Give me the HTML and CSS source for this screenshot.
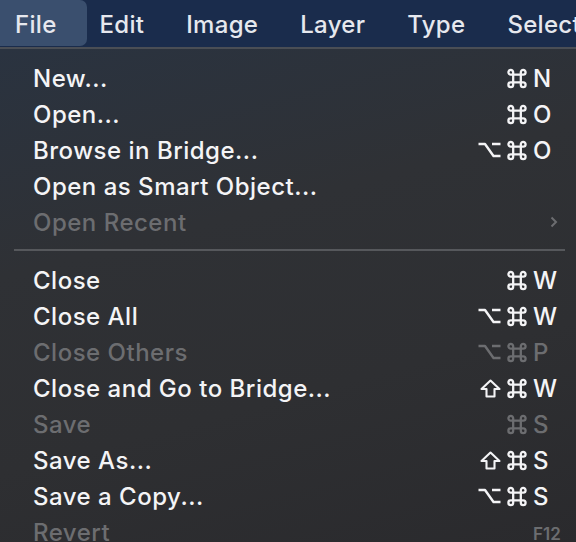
FILE: index.html
```html
<!DOCTYPE html>
<html>
<head>
<meta charset="utf-8">
<link rel="stylesheet" href="styles.css">
</head>
<body>
<div class="screen">
  <nav class="menubar">
    <span class="mb-item active">File</span>
    <span class="mb-item">Edit</span>
    <span class="mb-item">Image</span>
    <span class="mb-item">Layer</span>
    <span class="mb-item">Type</span>
    <span class="mb-item">Select</span>
  </nav>
  <div class="menu">
    <div class="row"><span class="label">New...</span><span class="sc"><span class="mods"><svg class="ic cmd" viewBox="0 0 22 22"><path d="M7 4.5 V17.5 A2.5 2.5 0 1 1 4.5 15 H17.5 A2.5 2.5 0 1 1 15 17.5 V4.5 A2.5 2.5 0 1 1 17.5 7 H4.5 A2.5 2.5 0 1 1 7 4.5 Z"/></svg></span><span class="key">N</span></span></div>
    <div class="row"><span class="label">Open...</span><span class="sc"><span class="mods"><svg class="ic cmd" viewBox="0 0 22 22"><path d="M7 4.5 V17.5 A2.5 2.5 0 1 1 4.5 15 H17.5 A2.5 2.5 0 1 1 15 17.5 V4.5 A2.5 2.5 0 1 1 17.5 7 H4.5 A2.5 2.5 0 1 1 7 4.5 Z"/></svg></span><span class="key">O</span></span></div>
    <div class="row"><span class="label">Browse in Bridge...</span><span class="sc"><span class="mods"><svg class="ic opt" viewBox="0 0 23 16"><path d="M0.5 2 H7 L15.5 14 H22.5 M14 2 H22.5"/></svg><svg class="ic cmd" viewBox="0 0 22 22"><path d="M7 4.5 V17.5 A2.5 2.5 0 1 1 4.5 15 H17.5 A2.5 2.5 0 1 1 15 17.5 V4.5 A2.5 2.5 0 1 1 17.5 7 H4.5 A2.5 2.5 0 1 1 7 4.5 Z"/></svg></span><span class="key">O</span></span></div>
    <div class="row"><span class="label">Open as Smart Object...</span></div>
    <div class="row disabled"><span class="label">Open Recent</span><span class="arrow"><svg width="8" height="12" viewBox="0 0 8 12"><path d="M1.5 1.5 L6 6 L1.5 10.5" fill="none" stroke="currentColor" stroke-width="2"/></svg></span></div>
    <div class="sep"></div>
    <div class="row"><span class="label">Close</span><span class="sc"><span class="mods"><svg class="ic cmd" viewBox="0 0 22 22"><path d="M7 4.5 V17.5 A2.5 2.5 0 1 1 4.5 15 H17.5 A2.5 2.5 0 1 1 15 17.5 V4.5 A2.5 2.5 0 1 1 17.5 7 H4.5 A2.5 2.5 0 1 1 7 4.5 Z"/></svg></span><span class="key">W</span></span></div>
    <div class="row"><span class="label">Close All</span><span class="sc"><span class="mods"><svg class="ic opt" viewBox="0 0 23 16"><path d="M0.5 2 H7 L15.5 14 H22.5 M14 2 H22.5"/></svg><svg class="ic cmd" viewBox="0 0 22 22"><path d="M7 4.5 V17.5 A2.5 2.5 0 1 1 4.5 15 H17.5 A2.5 2.5 0 1 1 15 17.5 V4.5 A2.5 2.5 0 1 1 17.5 7 H4.5 A2.5 2.5 0 1 1 7 4.5 Z"/></svg></span><span class="key">W</span></span></div>
    <div class="row disabled"><span class="label">Close Others</span><span class="sc"><span class="mods"><svg class="ic opt" viewBox="0 0 23 16"><path d="M0.5 2 H7 L15.5 14 H22.5 M14 2 H22.5"/></svg><svg class="ic cmd" viewBox="0 0 22 22"><path d="M7 4.5 V17.5 A2.5 2.5 0 1 1 4.5 15 H17.5 A2.5 2.5 0 1 1 15 17.5 V4.5 A2.5 2.5 0 1 1 17.5 7 H4.5 A2.5 2.5 0 1 1 7 4.5 Z"/></svg></span><span class="key">P</span></span></div>
    <div class="row"><span class="label">Close and Go to Bridge...</span><span class="sc"><span class="mods"><svg class="ic shift" viewBox="0 0 21 19"><path d="M10.5 1.5 L19.5 10 H14.5 V17.5 H6.5 V10 H1.5 Z"/></svg><svg class="ic cmd" viewBox="0 0 22 22"><path d="M7 4.5 V17.5 A2.5 2.5 0 1 1 4.5 15 H17.5 A2.5 2.5 0 1 1 15 17.5 V4.5 A2.5 2.5 0 1 1 17.5 7 H4.5 A2.5 2.5 0 1 1 7 4.5 Z"/></svg></span><span class="key">W</span></span></div>
    <div class="row disabled"><span class="label">Save</span><span class="sc"><span class="mods"><svg class="ic cmd" viewBox="0 0 22 22"><path d="M7 4.5 V17.5 A2.5 2.5 0 1 1 4.5 15 H17.5 A2.5 2.5 0 1 1 15 17.5 V4.5 A2.5 2.5 0 1 1 17.5 7 H4.5 A2.5 2.5 0 1 1 7 4.5 Z"/></svg></span><span class="key">S</span></span></div>
    <div class="row"><span class="label">Save As...</span><span class="sc"><span class="mods"><svg class="ic shift" viewBox="0 0 21 19"><path d="M10.5 1.5 L19.5 10 H14.5 V17.5 H6.5 V10 H1.5 Z"/></svg><svg class="ic cmd" viewBox="0 0 22 22"><path d="M7 4.5 V17.5 A2.5 2.5 0 1 1 4.5 15 H17.5 A2.5 2.5 0 1 1 15 17.5 V4.5 A2.5 2.5 0 1 1 17.5 7 H4.5 A2.5 2.5 0 1 1 7 4.5 Z"/></svg></span><span class="key">S</span></span></div>
    <div class="row"><span class="label">Save a Copy...</span><span class="sc"><span class="mods"><svg class="ic opt" viewBox="0 0 23 16"><path d="M0.5 2 H7 L15.5 14 H22.5 M14 2 H22.5"/></svg><svg class="ic cmd" viewBox="0 0 22 22"><path d="M7 4.5 V17.5 A2.5 2.5 0 1 1 4.5 15 H17.5 A2.5 2.5 0 1 1 15 17.5 V4.5 A2.5 2.5 0 1 1 17.5 7 H4.5 A2.5 2.5 0 1 1 7 4.5 Z"/></svg></span><span class="key">S</span></span></div>
    <div class="row disabled"><span class="label">Revert</span><span class="sc"><span class="key fkey">F12</span></span></div>
  </div>
</div>
</body>
</html>
```

FILE: styles.css
```css
* { box-sizing: border-box; }
html, body {
  margin: 0;
  padding: 0;
  background: #2c2c2f;
}
.screen {
  width: 576px;
  height: 542px;
  overflow: hidden;
  font-family: Inter, "Noto Sans", "DejaVu Sans", sans-serif;
  display: flex;
  flex-direction: column;
}
.menubar {
  height: 49px;
  flex: none;
  background: #1a2c4c;
  display: flex;
  align-items: flex-start;
  white-space: nowrap;
  border-bottom: 2px solid #4a4e55;
}
.mb-item {
  display: flex;
  align-items: center;
  padding: 2px 21px 0;
  font-size: 24px;
  font-weight: 500;
  letter-spacing: 0.3px;
  color: #e6e8ee;
  height: 46px;
}
.mb-item.active {
  margin-left: -6px;
  margin-right: -8px;
  padding-left: 21px;
  padding-right: 30px;
  background: #3a4f6e;
  border-radius: 0 7px 7px 0;
}
.menu {
  flex: 1;
  padding-top: 10px;
  background: linear-gradient(165deg, #2a3340 0%, #2f3135 35%, #2e2f32 65%, #2a2a2d 100%);
}
.row {
  height: 36px;
  display: flex;
  align-items: center;
  padding-left: 33px;
  padding-top: 2px;
  color: #f4f4f6;
  font-size: 24px;
  font-weight: 500;
  letter-spacing: 0.5px;
}
.row.disabled { color: #6c6d70; }
.label { flex: 1; white-space: nowrap; }
.sc {
  display: flex;
  align-items: center;
  margin-right: 13px;
}
.mods {
  display: flex;
  align-items: center;
  gap: 5px;
  margin-right: 5px;
}
.ic {
  display: block;
  fill: none;
  stroke: currentColor;
  stroke-width: 2.4;
  stroke-linejoin: round;
}
.ic.cmd { width: 22px; height: 21px; }
.ic.opt { width: 23px; height: 16px; }
.ic.shift { width: 21px; height: 19px; stroke-width: 2.1; }
.key {
  width: 30px;
  text-align: left;
  letter-spacing: 0;
}
.fkey {
  font-size: 17px;
  font-weight: 600;
  margin-top: 3px;
}
.arrow {
  margin-right: 18px;
  display: flex;
  color: #6c6d70;
}
.sep {
  height: 22px;
  display: flex;
  align-items: center;
  padding: 0 11px 0 14px;
}
.sep::before {
  content: "";
  display: block;
  width: 100%;
  height: 2px;
  background: #56585c;
}
```
